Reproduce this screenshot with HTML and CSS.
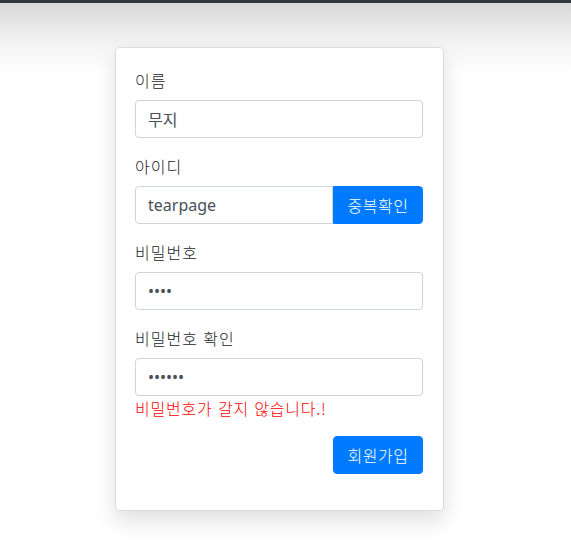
FILE: index.html
```html
<!DOCTYPE html>
<html lang="ko">
<head>
<meta charset="utf-8">
<link rel="stylesheet" href="styles.css">
</head>
<body>
<div class="topbar"></div>
<div class="page">
  <form class="card">
    <div class="group">
      <label class="label">이름</label>
      <input class="input" type="text" value="무지">
    </div>
    <div class="group">
      <label class="label">아이디</label>
      <div class="input-group">
        <input class="input input-left" type="text" value="tearpage">
        <button class="btn btn-append" type="button">중복확인</button>
      </div>
    </div>
    <div class="group">
      <label class="label">비밀번호</label>
      <input class="input" type="password" value="1234">
    </div>
    <div class="group">
      <label class="label">비밀번호 확인</label>
      <input class="input" type="password" value="123456">
      <div class="error">비밀번호가 갈지 않습니다.!</div>
    </div>
    <div class="group actions">
      <button class="btn" type="button">회원가입</button>
    </div>
  </form>
</div>
</body>
</html>
```

FILE: styles.css
```css
html, body {
  margin: 0;
  padding: 0;
}
body {
  background: #fff;
  font-family: "Segoe UI", "Noto Sans", "Noto Sans CJK KR", sans-serif;
  font-size: 16px;
  line-height: 1.5;
  color: #212529;
}
.topbar {
  height: 3px;
  background: #343a40;
}
.page {
  box-sizing: border-box;
  background: linear-gradient(to bottom, #d9d9d9 0px, #f3f3f3 40px, #ffffff 70px, #ffffff 100%);
  padding: 44px 0 0 115px;
  height: 548px;
}
.card {
  box-sizing: border-box;
  width: 329px;
  background: #fff;
  border: 1px solid #dcdcdc;
  border-radius: 4px;
  padding: 20px 19px 20px 19px;
  box-shadow: 0 10px 22px rgba(0, 0, 0, 0.13);
}
.group {
  margin-bottom: 16px;
}
.label {
  display: block;
  margin-bottom: 8px;
  font-family: "Noto Sans CJK KR", sans-serif;
  font-weight: 300;
  letter-spacing: 1px;
  line-height: 24px;
}
.input {
  display: block;
  box-sizing: border-box;
  width: 288px;
  height: 38px;
  padding: 6px 12px;
  font-family: "Noto Sans", "Noto Sans CJK KR", sans-serif;
  font-size: 16px;
  line-height: 24px;
  color: #495057;
  background: #fff;
  border: 1px solid #ced4da;
  border-radius: 4px;
  outline: none;
}
.input-group {
  display: flex;
  width: 288px;
}
.input-left {
  width: auto;
  flex: 1;
  min-width: 0;
  border-radius: 4px 0 0 4px;
}
.btn {
  box-sizing: border-box;
  height: 38px;
  padding: 6px 0;
  font-family: "Noto Sans CJK KR", sans-serif;
  font-weight: 300;
  letter-spacing: 0.5px;
  font-size: 16px;
  line-height: 24px;
  color: #fff;
  background: #007bff;
  border: 1px solid #007bff;
  border-radius: 4px;
  cursor: pointer;
}
.btn-append {
  width: 90px;
  border-radius: 0 4px 4px 0;
}
.error {
  color: #ff0000;
  font-family: "Noto Sans CJK KR", sans-serif;
  font-weight: 300;
  letter-spacing: 0.8px;
  line-height: 24px;
}
.actions {
  display: flex;
  justify-content: flex-end;
  width: 288px;
}
.actions .btn {
  width: 90px;
}
```
